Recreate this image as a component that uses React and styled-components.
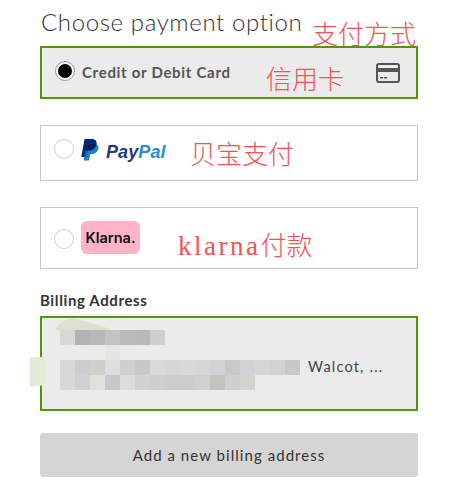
import React from "react";
import styled, { createGlobalStyle } from "styled-components";

const Global = createGlobalStyle`
  html, body { margin: 0; padding: 0; background: #fff; }
  body { font-family: "Lato", "Liberation Sans", sans-serif; }
`;
const CJK = `"Noto Sans CJK SC", "Noto Sans CJK JP", sans-serif`;

const Page = styled.div`
  position: relative;
  width: 470px;
  height: 489px;
  overflow: hidden;
  box-sizing: border-box;
  padding: 8px 52px 0 40px;
  display: flex;
  flex-direction: column;
`;
const Title = styled.h1`
  margin: 0 0 10px 1px;
  height: 28px;
  font-size: 24px;
  line-height: 28px;
  font-weight: 300;
  letter-spacing: 0.62px;
  color: #333;
  white-space: nowrap;
`;
const Card = styled.div`
  box-sizing: border-box;
  height: ${(p) => p.$h}px;
  margin-bottom: ${(p) => p.$mb}px;
  display: flex;
  align-items: flex-start;
  padding: ${(p) => p.$pt}px 16px 0 ${(p) => p.$pl}px;
  border: ${(p) => (p.$active ? "2px solid #4c9a00" : "1px solid #c9c9c9")};
  background: ${(p) => (p.$active ? "#ebebeb" : "#fff")};
`;
const Radio = styled.span`
  box-sizing: border-box;
  flex: none;
  width: 20px;
  height: 20px;
  margin-top: ${(p) => p.$mt || 0}px;
  border-radius: 50%;
  background: #fff;
  border: 1px solid ${(p) => (p.$on ? "#9a9a9a" : "#cfcfcf")};
  display: flex;
  align-items: center;
  justify-content: center;
  &::after {
    content: "";
    display: ${(p) => (p.$on ? "block" : "none")};
    width: 14px;
    height: 14px;
    border-radius: 50%;
    background: #000;
  }
`;
const CardLabel = styled.span`
  margin: 1px 0 0 7px;
  font-size: 15px;
  line-height: 20px;
  font-weight: 700;
  letter-spacing: 0.7px;
  color: #555;
  white-space: nowrap;
`;
const CardIcon = styled.svg`
  flex: none;
  margin: 2px 0 0 auto;
  width: 24px;
  height: 20px;
`;
const PayPalMark = styled.svg`
  flex: none;
  margin: 0 0 0 7px;
  width: 18px;
  height: 22px;
`;
const PayPalWord = styled.span`
  margin: 2px 0 0 7px;
  font-family: "Liberation Sans", sans-serif;
  font-style: italic;
  font-weight: 700;
  font-size: 18px;
  line-height: 22px;
  letter-spacing: 0.1px;
  color: #1f3a7f;
  b { color: #1f8fd0; font-weight: 700; }
`;
const KlarnaBadge = styled.span`
  flex: none;
  margin-left: 7px;
  width: 59px;
  height: 33px;
  border-radius: 6px;
  background: #ffb3c7;
  display: flex;
  align-items: center;
  justify-content: center;
  font-family: "Inter", "Liberation Sans", sans-serif;
  font-weight: 600;
  font-size: 14.5px;
  letter-spacing: 0;
  color: #111;
`;
const BillingLabel = styled.div`
  height: 18px;
  margin: 0 0 7px 0;
  font-size: 15px;
  line-height: 18px;
  font-weight: 700;
  letter-spacing: 0.62px;
  color: #333;
`;
const AddressBox = styled.div`
  position: relative;
  box-sizing: border-box;
  height: 95px;
  margin-bottom: 22px;
  padding: 12px 0 0 18px;
  border: 2px solid #4c9a00;
  background: #ebebeb;
`;
const MosaicRow = styled.div`
  display: flex;
  align-items: center;
  height: 15px;
  margin: ${(p) => p.$mt || 0}px 0 0 ${(p) => p.$ml || 0}px;
`;
const Tile = styled.i`
  display: block;
  flex: none;
  width: 15px;
  height: 15px;
  background: ${(p) => p.$c};
`;
const AddressText = styled.span`
  margin: -2px 0 0 8px;
  font-size: 14.5px;
  letter-spacing: 1.2px;
  line-height: 15px;
  color: #444;
  white-space: nowrap;
`;
const Smudge = styled.svg`
  position: absolute;
  left: -2px;
  top: -2px;
  width: 378px;
  height: 95px;
  overflow: visible;
  pointer-events: none;
`;
const AddButton = styled.button`
  box-sizing: border-box;
  height: 44px;
  width: 378px;
  border: 0;
  border-radius: 3px;
  background: #d5d5d5;
  font-family: inherit;
  font-size: 15px;
  letter-spacing: 1.05px;
  color: #333;
`;
const Note = styled.span`
  position: absolute;
  left: ${(p) => p.$x}px;
  top: ${(p) => p.$y}px;
  font-family: ${CJK};
  font-weight: 300;
  font-size: 26px;
  line-height: 30px;
  color: #f55252;
  white-space: nowrap;
`;
const NoteLatin = styled.span`
  font-family: "Liberation Serif", serif;
  font-size: 27px;
  letter-spacing: 2.5px;
`;

const row1 = ["#d9d8d5", "#b3b3b6", "#b9b8b7", "#c2c4c3", "#bcbabb", "#bab9b9", "#cfcfcf"];
const row2 = ["#d8d7d5", "#cbccce", "#d0d0cb", "#dededc", "#cfcfcd", "#c8c8c8", "#d9d9d9", "#d6d6d6", "#d8d8d8", "#d8d6d4", "#d2d2d6", "#c9c9c9", "#d1d2d4", "#d6d5d1", "#d2d2d0", "#c9c8c8"];
const row3 = ["#d9d8d6", "#cfd0d2", "#dfe1df", "#c4c9cb", "#dcdcdc", "#d1d1cf", "#cfcfcd", "#cdcdcb", "#cfcccc", "#d0d0d3", "#c4c2c0", "#ccd0ce", "#d3d3d1"];

export default function App() {
  return (
    <Page>
      <Global />
      <Title>Choose payment option</Title>
      <Card $active $h={53} $mb={26} $pt={13} $pl={13}>
        <Radio $on />
        <CardLabel>Credit or Debit Card</CardLabel>
        <CardIcon viewBox="0 0 24 20">
          <rect x="1" y="1" width="22" height="18" rx="2" fill="none" stroke="#555" strokeWidth="2" />
          <rect x="1" y="5" width="22" height="4" fill="#555" />
          <rect x="4" y="14" width="3" height="1.5" fill="#555" />
          <rect x="8" y="14" width="3" height="1.5" fill="#555" />
        </CardIcon>
      </Card>
      <Card $h={56} $mb={26} $pt={13} $pl={13}>
        <Radio />
        <PayPalMark viewBox="0 0 18 22">
          <path d="M3.500 0H10.500C14.500 0 16.300 2.200 15.500 5.800C14.700 9.800 12 11.500 8.500 11.500H7L5.800 18H0.300Z" fill="#012a75" />
          <path d="M5.500 4.500H12.500C16 4.500 18 6.500 17.400 9.500C16.700 13 14 15 10.500 15H9.300L8 21.500H2.600Z" fill="#0070ba" opacity="0.88" />
          <path d="M5.500 4.500H15.300C14.500 9 12 11.500 8.500 11.500H4.300Z" fill="#001c64" />
        </PayPalMark>
        <PayPalWord>Pay<b>Pal</b></PayPalWord>
      </Card>
      <Card $h={62} $mb={22} $pt={13} $pl={13}>
        <Radio $mt={8} />
        <KlarnaBadge>Klarna.</KlarnaBadge>
      </Card>
      <BillingLabel>Billing Address</BillingLabel>
      <AddressBox>
        <MosaicRow>{row1.map((c, i) => <Tile key={i} $c={c} />)}</MosaicRow>
        <MosaicRow $ml={45}><Tile $c="#e5e5e5" /></MosaicRow>
        <MosaicRow>
          {row2.map((c, i) => <Tile key={i} $c={c} />)}
          <AddressText>Walcot, ...</AddressText>
        </MosaicRow>
        <MosaicRow>{row3.map((c, i) => <Tile key={i} $c={c} />)}</MosaicRow>
        <Smudge viewBox="0 0 378 95">
          <path d="M15 14C20 5 28 2 35 3C50 6 62 10 72 14Z" fill="#dae2cf" />
          <path d="M-10 41H3C5 41 5 43 5 47V63C5 67 4 69 0 70L-10 71Z" fill="#e2ead8" />
        </Smudge>
      </AddressBox>
      <AddButton>Add a new billing address</AddButton>
      <Note $x={312} $y={18}>支付方式</Note>
      <Note $x={266} $y={63}>信用卡</Note>
      <Note $x={190} $y={138}>贝宝支付</Note>
      <Note $x={178} $y={229}><NoteLatin>klarna</NoteLatin>付款</Note>
    </Page>
  );
}
